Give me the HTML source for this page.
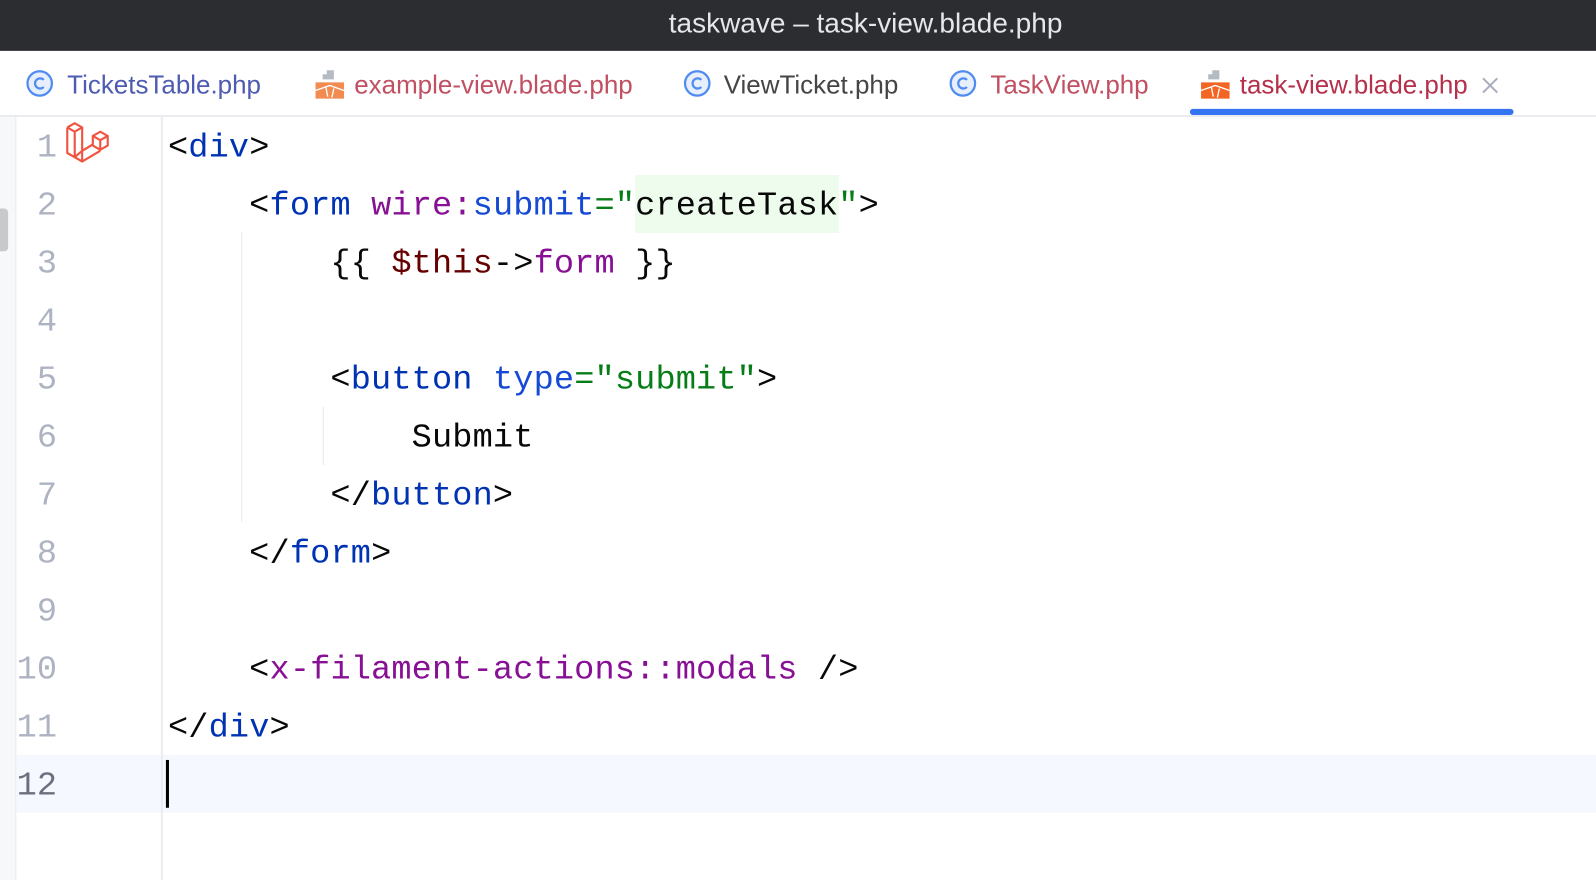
<!DOCTYPE html>
<html><head><meta charset="utf-8"><style>
html,body{margin:0;padding:0;width:1596px;height:880px;overflow:hidden;background:#fff}
#w{position:absolute;left:0;top:0;width:1568px;height:865px;transform:scale(1.01786,1.01734);transform-origin:0 0;background:#fff}
.title{position:absolute;left:0;top:0;width:1568px;height:50px;background:#2b2d30;color:#e6e7ea;font-family:"Liberation Sans",sans-serif;font-size:27.5px;line-height:46px}
.tabs{position:absolute;left:0;top:51px;width:1568px;height:62px;border-bottom:2px solid #ebecf0;background:#fff}
.tab{position:absolute;top:0;height:62px;font-family:"Liberation Sans",sans-serif;font-size:25.5px;line-height:66px;white-space:nowrap}
.ul{position:absolute;left:1169px;top:107px;width:318px;height:6px;border-radius:3px;background:#3574f0}
.strip{position:absolute;left:0;top:115px;width:15px;height:750px;background:#f7f8fa;border-right:1px solid #ebecf0}
.gut{position:absolute;left:158px;top:115px;width:2px;height:750px;background:#ebecf0}
.ln{position:absolute;left:16px;width:40px;text-align:right;font-family:"Liberation Mono",monospace;font-size:33px;color:#aeb3c2;height:57px;line-height:61px}
.code{position:absolute;left:165px;font-family:"Liberation Mono",monospace;font-size:33px;height:57px;line-height:61px;white-space:pre;color:#080808;letter-spacing:0.15px}
.t{color:#0033b3}.p{color:#871094}.a{color:#174ad4}.g{color:#067d17}.r{color:#660000}
.hl{position:absolute;left:16px;top:742px;width:1552px;height:57px;background:#f5f8fe}
.guide{position:absolute;width:1px;background:#e6e7ea}
</style></head><body><div id="w">
<div class="title"><span style="position:absolute;left:657px;top:0">taskwave – task-view.blade.php</span></div>
<div class="tabs">
 <svg style="position:absolute;left:25px;top:17px" width="28" height="28"><circle cx="14" cy="14" r="12" fill="#e7effd" stroke="#4f8bf0" stroke-width="2.2"/><path d="M18 10.5a5 5 0 1 0 0 7" fill="none" stroke="#4f8bf0" stroke-width="2.2"/></svg>
 <div class="tab" style="left:66px;color:#4d5bb0">TicketsTable.php</div>
 <svg style="position:absolute;left:308px;top:16px" width="32" height="32"><path d="M13 2h7v9h-7z M9 6h4v5H9z" fill="#b4bbc3"/><path d="M2 14h28v16H2z" fill="#f28b50"/><path d="M2 22l14-5 14 5M12 18l2 10M20 20l-2 9" stroke="#fff" stroke-width="1.3" fill="none"/></svg>
 <div class="tab" style="left:348px;color:#c05062">example-view.blade.php</div>
 <svg style="position:absolute;left:671px;top:17px" width="28" height="28"><circle cx="14" cy="14" r="12" fill="#e7effd" stroke="#4f8bf0" stroke-width="2.2"/><path d="M18 10.5a5 5 0 1 0 0 7" fill="none" stroke="#4f8bf0" stroke-width="2.2"/></svg>
 <div class="tab" style="left:711px;color:#454545">ViewTicket.php</div>
 <svg style="position:absolute;left:932px;top:17px" width="28" height="28"><circle cx="14" cy="14" r="12" fill="#e7effd" stroke="#4f8bf0" stroke-width="2.2"/><path d="M18 10.5a5 5 0 1 0 0 7" fill="none" stroke="#4f8bf0" stroke-width="2.2"/></svg>
 <div class="tab" style="left:973px;color:#c05062">TaskView.php</div>
 <svg style="position:absolute;left:1178px;top:16px" width="32" height="32"><path d="M13 2h7v9h-7z M9 6h4v5H9z" fill="#b4bbc3"/><path d="M2 14h28v16H2z" fill="#f26522"/><path d="M2 22l14-5 14 5M12 18l2 10M20 20l-2 9" stroke="#fff" stroke-width="1.3" fill="none"/></svg>
 <div class="tab" style="left:1218px;color:#b5304b">task-view.blade.php</div>
 <svg style="position:absolute;left:1455px;top:24px" width="18" height="18"><path d="M2 2L16 16M16 2L2 16" stroke="#a8adbd" stroke-width="2"/></svg>
</div>
<div class="ul"></div>
<div class="strip"></div>
<div style="position:absolute;left:0;top:205px;width:8px;height:42px;background:#c9c9cc;border-radius:0 4px 4px 0"></div>
<div class="hl"></div>
<div class="gut"></div>
<div class="guide" style="left:237px;top:228px;height:285px"></div>
<div class="guide" style="left:317px;top:400px;height:57px"></div>
<svg style="position:absolute;left:64px;top:119px" width="46" height="46" viewBox="0 0 44 44" fill="none" stroke="#f0533f" stroke-width="2"><path d="M2 6l7-4 7 4v22l10-6V14l7-4 7 4v9l-7 4-7-4M26 14l7 4 7-4M33 18v9M2 6v24l14 8 17-10M2 6l7 4 7-4M9 10v24M16 28l-7 6M16 38V28"/></svg>
<div class="ln" style="top:115px">1</div>
<div class="ln" style="top:172px">2</div>
<div class="ln" style="top:229px">3</div>
<div class="ln" style="top:286px">4</div>
<div class="ln" style="top:343px">5</div>
<div class="ln" style="top:400px">6</div>
<div class="ln" style="top:457px">7</div>
<div class="ln" style="top:514px">8</div>
<div class="ln" style="top:571px">9</div>
<div class="ln" style="top:628px">10</div>
<div class="ln" style="top:685px">11</div>
<div class="ln" style="top:742px;color:#6c707e">12</div>
<div class="code" style="top:115px">&lt;<span class="t">div</span>&gt;</div>
<div class="code" style="top:172px">    &lt;<span class="t">form</span> <span class="p">wire:</span><span class="a">submit</span><span class="g">="</span><span style="background:#edfcec;display:inline-block;height:57px">createTask</span><span class="g">"</span>&gt;</div>
<div class="code" style="top:229px">        {{ <span class="r">$this</span>-&gt;<span class="p">form</span> }}</div>
<div class="code" style="top:343px">        &lt;<span class="t">button</span> <span class="a">type</span><span class="g">="submit"</span>&gt;</div>
<div class="code" style="top:400px">            Submit</div>
<div class="code" style="top:457px">        &lt;/<span class="t">button</span>&gt;</div>
<div class="code" style="top:514px">    &lt;/<span class="t">form</span>&gt;</div>
<div class="code" style="top:628px">    &lt;<span class="p">x-filament-actions::modals</span> /&gt;</div>
<div class="code" style="top:685px">&lt;/<span class="t">div</span>&gt;</div>
<div style="position:absolute;left:163px;top:747px;width:3px;height:47px;background:#000"></div>
</div></body></html>
